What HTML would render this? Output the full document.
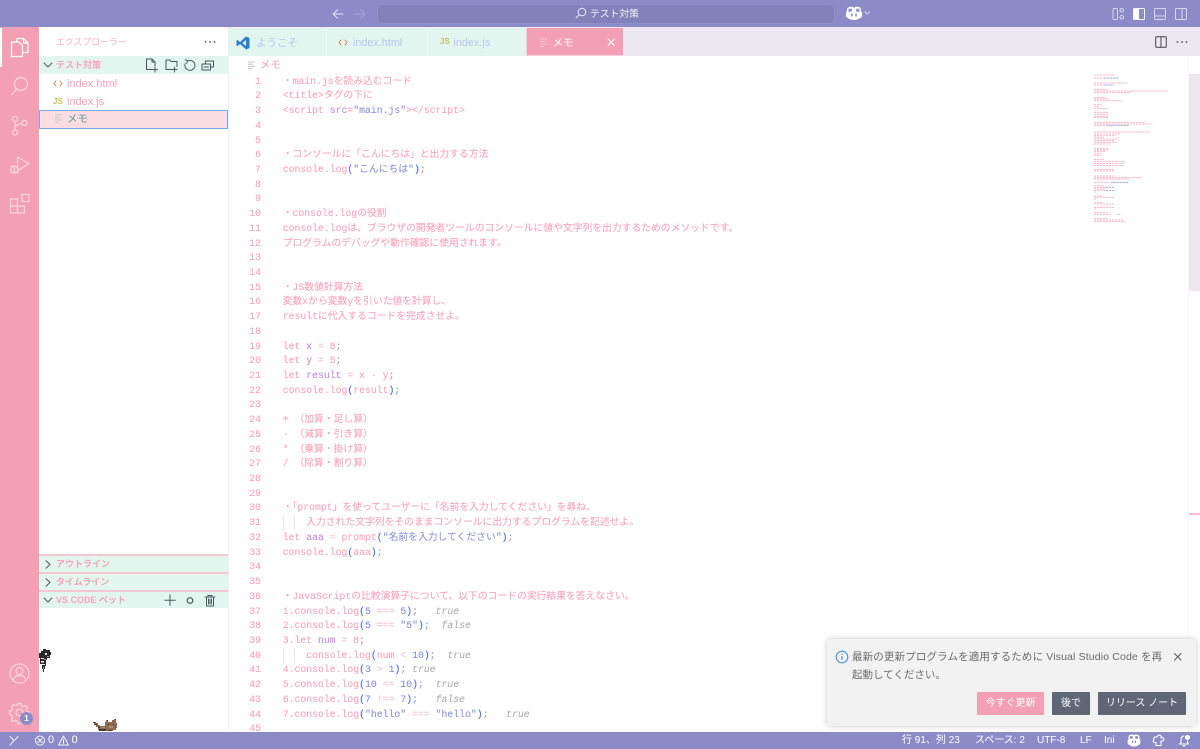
<!DOCTYPE html>
<html lang="ja"><head><meta charset="utf-8"><title>VS Code</title>
<style>
html,body{margin:0;padding:0;width:1200px;height:749px;overflow:hidden;background:#fff}
body{position:relative;font-family:"Liberation Sans","Noto Sans CJK JP",sans-serif}
.a{position:absolute}
svg{position:absolute;overflow:visible}
.s{fill:none;stroke-linecap:round;stroke-linejoin:round}
.t{position:absolute;white-space:nowrap;line-height:14px}
.h{position:absolute;left:39px;width:189px;background:#e2f5ee}
.ht{position:absolute;left:56px;font-size:9px;font-weight:bold;color:#f6a5ba;line-height:16px;white-space:nowrap}
#nums{position:absolute;left:232px;top:74.64px;width:29px;text-align:right;font:9.8px/14.72px "Liberation Mono",monospace;color:#f7a5ba;-webkit-text-stroke:.1px #f7a5ba;height:657px;overflow:hidden}
#code{position:absolute;left:282.7px;top:74.64px;width:800px;font:9.8px/14.72px "Liberation Mono","Noto Sans CJK JP",monospace;color:#f7a5ba;-webkit-text-stroke:.1px currentColor}
#code div{white-space:pre}
#code div,#nums div{height:14.72px}
.v{color:#c68ade}.q{color:#8d93d6}.b{color:#4468f0}.p{color:#97a3c4}.n{color:#8a8ee0}.o{color:#f3c4d8}.c{color:#aeaeae;font-style:italic}.k{color:#c195dc}
.st{position:absolute;top:732px;height:17px;line-height:17px;font-size:10px;color:#fff;white-space:nowrap}
.btn{position:absolute;top:692px;height:23px;line-height:23px;text-align:center;font-size:10px;color:#fff;border-radius:1px;background:#5f6675}
</style></head><body>

<!-- title bar -->
<div class="a" style="left:0;top:0;width:1200px;height:27px;background:#8b8cc7"></div>
<div class="a" style="left:377px;top:4px;width:456px;height:18px;background:#8282bb;border:1px solid #8f90c9;border-radius:5px"></div>
<svg style="left:332px;top:8px" width="12" height="12" viewBox="0 0 12 12"><path class="s" stroke="#e6e6f5" d="M11 6H1.500M5.500 1.800 1.200 6l4.300 4.200"/></svg>
<svg style="left:354px;top:8px" width="12" height="12" viewBox="0 0 12 12"><path class="s" stroke="#a3a4d6" d="M1 6h9.500M6.500 1.800 10.800 6l-4.300 4.200"/></svg>
<svg style="left:575px;top:7px" width="12" height="12" viewBox="0 0 12 12"><circle class="s" stroke="#e8e8f6" cx="7" cy="5" r="3.800"/><path class="s" stroke="#e8e8f6" d="M4.200 7.800 1 11"/></svg>
<div class="t" style="left:590px;top:7.500px;font-size:9.800px;color:#f2f2fa">テスト対策</div>
<svg style="left:844px;top:6px" width="26" height="15" viewBox="0 0 26 15"><path fill="#fff" d="M3 3.500C3 1.500 5 .8 7 .8c1.300 0 2.300.4 2.800 1.200h.4C10.700 1.200 11.700.8 13 .8c2 0 4 .7 4 2.700 0 .6 0 1.200-.2 1.700.9.500 1.200 1.100 1.200 2V10c0 .6-.3 1-.8 1.400C15.500 12.700 13 14 10 14s-5.500-1.300-7.200-2.600C2.300 11 2 10.600 2 10V7.200c0-.9.300-1.500 1.200-2C3 4.700 3 4.100 3 3.500z"/><path fill="#8b8cc7" d="M4.500 2.800h3.300v3H4.500zM12.200 2.800h3.300v3h-3.300zM7.200 7.500h1.500v3H7.200zM11.300 7.500h1.500v3h-1.500z"/><path class="s" stroke="#d5d6ee" d="M21 6l2.200 2.200L25.400 6"/></svg>
<svg style="left:1112px;top:7px" width="80" height="14" viewBox="0 0 80 14">
<rect x="1" y="1.500" width="4.500" height="11" rx="1" class="s" stroke="#d5d6ee"/><rect x="8" y="1.500" width="3.500" height="3.500" rx="1.700" class="s" stroke="#d5d6ee"/><rect x="8" y="8.500" width="3.500" height="3.500" rx="1.700" class="s" stroke="#d5d6ee"/>
<rect x="21.500" y="1.500" width="11" height="11" rx="1" class="s" stroke="#f4f4fb"/><rect x="22" y="2" width="5" height="10" fill="#fff"/>
<rect x="42.500" y="1.500" width="11" height="11" rx="1" class="s" stroke="#d5d6ee"/><path class="s" stroke="#d5d6ee" d="M43 9h10"/>
<rect x="63.500" y="1.500" width="11" height="11" rx="1" class="s" stroke="#d5d6ee"/><path class="s" stroke="#d5d6ee" d="M70 2v10"/>
</svg>

<!-- activity bar -->
<div class="a" style="left:0;top:27px;width:39px;height:705px;background:#f3a0b5"></div>
<div class="a" style="left:0;top:28px;width:2px;height:39px;background:#fff"></div>
<svg style="left:10px;top:37px" width="20" height="21" viewBox="0 0 20 21"><path class="s" stroke="#fff" stroke-width="1.200" d="M7 5V1.500h6.500L18 6v9.500h-5M13.500 1.500V6H18M1.500 5H9l3.500 3.500v11h-11z"/></svg>
<svg style="left:10px;top:76px" width="20" height="21" viewBox="0 0 20 21"><circle class="s" stroke="#fbd5df" stroke-width="1.200" cx="11" cy="8" r="6.500"/><path class="s" stroke="#fbd5df" stroke-width="1.200" d="M6.500 13 2 18.500"/></svg>
<svg style="left:10px;top:115px" width="20" height="21" viewBox="0 0 20 21"><g class="s" stroke="#fbd5df" stroke-width="1.200"><circle cx="5" cy="4" r="2.500"/><circle cx="5" cy="17.500" r="2.500"/><circle cx="14.500" cy="8" r="2.500"/><path d="M5 6.500v8.500M12 8.500c-3 .5-7 1.500-7 5"/></g></svg>
<svg style="left:9px;top:154px" width="21" height="21" viewBox="0 0 21 21"><g class="s" stroke="#fbd5df" stroke-width="1.200"><path d="M8.500 3 20 9.500 10 16M8.500 3v6"/><circle cx="5.500" cy="15.500" r="3.500"/><path d="M5.500 12v7M1 15.500h1.500M8.500 15.500H10M2 12l1 1M9 12l-1 1M2 19l1-1M9 19l-1-1"/></g></svg>
<svg style="left:9px;top:193px" width="21" height="22" viewBox="0 0 21 22"><g class="s" stroke="#fbd5df" stroke-width="1.200"><rect x="1.500" y="6" width="7" height="7"/><rect x="1.500" y="13" width="7" height="7"/><rect x="8.500" y="13" width="7" height="7"/><rect x="13" y="1.500" width="7" height="7"/></g></svg>
<svg style="left:9px;top:663px" width="21" height="21" viewBox="0 0 21 21"><g class="s" stroke="#fbd5df" stroke-width="1.200"><circle cx="10.500" cy="10.500" r="9.500"/><circle cx="10.500" cy="8" r="3.500"/><path d="M4 17c1-3.500 4-4.500 6.500-4.500S16 13.500 17 17"/></g></svg>
<svg style="left:9px;top:702px" width="21" height="21" viewBox="0 0 21 21"><g class="s" stroke="#fbd5df" stroke-width="1.200"><circle cx="10.500" cy="10.500" r="3.500"/><path d="M9 1.500h3l.5 2.500 2 .8 2.200-1.400 2 2-1.400 2.200.8 2 2.500.5v3l-2.500.5-.8 2 1.400 2.200-2 2-2.200-1.400-2 .8-.5 2.500H9l-.5-2.500-2-.8-2.200 1.400-2-2 1.400-2.200-.8-2L.5 12V9L3 8.500l.8-2L2.400 4.300l2-2 2.200 1.400 2-.8z"/></g></svg>
<div class="a" style="left:20px;top:712px;width:13px;height:13px;border-radius:50%;background:#8b8cc7;color:#fff;font-size:8px;font-weight:bold;line-height:13px;text-align:center">1</div>

<!-- sidebar -->
<div class="t" style="left:56px;top:35px;font-size:8.900px;color:#f8b1c4">エクスプローラー</div>
<svg style="left:204px;top:40px" width="12" height="4" viewBox="0 0 12 4"><g fill="#555"><circle cx="1.500" cy="2" r=".9"/><circle cx="6" cy="2" r=".9"/><circle cx="10.500" cy="2" r=".9"/></g></svg>
<div class="h" style="top:56px;height:18px"></div>
<svg style="left:43px;top:62px" width="10" height="6" viewBox="0 0 10 6"><path class="s" stroke="#555" d="M1 1l4 4 4-4"/></svg>
<div class="ht" style="top:57px">テスト対策</div>
<svg style="left:145px;top:58px" width="72" height="15" viewBox="0 0 72 15"><g class="s" stroke="#4d5560" stroke-width="1">
<path d="M7 11.500H1.500V1H7l3 3v4M7 1v3h3M10 9v5M7.500 11.500h5"/>
<path d="M27 11.500H21V2h4l1 1.500h6v5M29.500 9v5M27 11.500h5"/>
<path d="M42.600 2.900A5 5 0 1 1 40.200 5.600M40.300 1.600l2.400 1.200-1 2.400"/>
<path d="M60.500 5.500V3h8v6h-2.500M57 6h8.500v6H57zM59 9h4.500"/></g></svg>
<svg style="left:53px;top:80px" width="10" height="7" viewBox="0 0 10 7"><path class="s" stroke="#c98a4f" stroke-width="1" d="M3 1 1 3.500 3 6M7 1 9 3.500 7 6"/></svg>
<div class="t" style="left:67px;top:77px;font-size:11px;color:#f6a0b6">index.html</div>
<div class="t" style="left:53px;top:95px;font-size:8px;font-weight:bold;color:#c7bf5c">JS</div>
<div class="t" style="left:67px;top:95px;font-size:11px;color:#f6a0b6">index.js</div>
<div class="a" style="left:39px;top:110px;width:187px;height:16.500px;background:#f9dce4;border:1px solid #74a9ec"></div>
<svg style="left:55px;top:114px" width="8" height="10" viewBox="0 0 8 10"><path stroke="#c9c9c9" stroke-width="1.100" d="M0 1h7M0 3.500h5M0 6h7M0 8.500h4"/></svg>
<div class="t" style="left:67px;top:112px;font-size:10.500px;color:#5e9f94">メモ</div>

<div class="a" style="left:39px;top:554px;width:189px;height:2px;background:#f6c6d3"></div>
<div class="h" style="top:556px;height:16px"></div>
<svg style="left:45px;top:560px" width="6" height="9" viewBox="0 0 6 9"><path class="s" stroke="#555" d="M1 .8l4 3.700-4 3.700"/></svg>
<div class="ht" style="top:556px">アウトライン</div>
<div class="a" style="left:39px;top:572px;width:189px;height:2px;background:#f6c6d3"></div>
<div class="h" style="top:574px;height:16px"></div>
<svg style="left:45px;top:578px" width="6" height="9" viewBox="0 0 6 9"><path class="s" stroke="#555" d="M1 .8l4 3.700-4 3.700"/></svg>
<div class="ht" style="top:574px">タイムライン</div>
<div class="a" style="left:39px;top:590px;width:189px;height:2px;background:#f6c6d3"></div>
<div class="h" style="top:592px;height:16px"></div>
<svg style="left:43px;top:597px" width="10" height="6" viewBox="0 0 10 6"><path class="s" stroke="#555" d="M1 1l4 4 4-4"/></svg>
<div class="ht" style="top:592px">VS CODE ペット</div>
<svg style="left:164px;top:594px" width="52" height="13" viewBox="0 0 52 13"><g class="s" stroke="#4d5560" stroke-width="1"><path d="M6 1v10.500M.8 6.300h10.500"/><circle cx="26" cy="6.500" r="2.800" stroke-width="1.200"/><path d="M41 3h10M44 3V1.500h4V3M42.500 3v9h7V3M44.500 5v5M46 5v5M47.500 5v5"/></g></svg>

<!-- pets -->
<svg style="left:39px;top:649px" width="13" height="25" viewBox="0 0 13 25" shape-rendering="crispEdges">
<path fill="#2a2a2a" d="M2 2h2V0h3v1h4v2h1v3h-1v3H8v2H7v6H6v3H5v3H4v-3H3v-5H1v-6H0V4h2z"/>
<path fill="#ededed" d="M6 4h2v2H6zM2 9h3v1H2zM2 12h3v1H2zM3 15h3v1H3z"/>
<path fill="#9a9a9a" d="M8 7h2v1H8zM5 10h2v1H5zM2 13h3v1H2zM4 18h1v2H4z"/>
</svg>
<svg style="left:93px;top:719px" width="24" height="13" viewBox="0 0 24 13" shape-rendering="crispEdges">
<path fill="#8a6a50" d="M12 3h1V1h2v2h4V1h2V0h2v4h1v5h-1v2h-3v1H6v-1H5V8H3V6H1V4H0V3h3v1h2v2h2v1h5z"/>
<path fill="#4b3627" d="M0 3h2v1H0zM2 5h2v1H2zM5 8h2v1H5zM6 10h7v2H6zM15 11h4v1h-4zM15 5h1v1h-1zM20 5h1v1h-1zM14 1h1v1h-1zM22 0h1v1h-1z"/>
<path fill="#b08f70" d="M16 7h4v2h-4zM8 8h4v1H8z"/>
</svg>

<!-- tabs -->
<div class="a" style="left:228px;top:27px;width:972px;height:29px;background:#ede8ef"></div>
<div class="a" style="left:228px;top:28px;width:298px;height:28px;background:#e2f5ee"></div>
<div class="a" style="left:326px;top:28px;width:1px;height:28px;background:#ecf8f4"></div>
<div class="a" style="left:427px;top:28px;width:1px;height:28px;background:#ecf8f4"></div>
<div class="a" style="left:526px;top:28px;width:97px;height:28px;background:#f3a0b5;box-sizing:border-box;border-left:1px solid #f9cdd9;border-bottom:1px solid #f9cdd9"></div>
<svg style="left:236px;top:36px" width="14" height="14" viewBox="0 0 14 14"><path fill="#2b7fd0" d="M10 .5 13.500 2v10L10 13.500 4 8 1.500 10 .5 9.500V4.500L1.500 4 4 6zM10 4 6.300 7 10 10z"/></svg>
<div class="t" style="left:256px;top:36px;font-size:10.500px;color:#b9c6ee">ようこそ</div>
<svg style="left:338px;top:39px" width="10" height="7" viewBox="0 0 10 7"><path class="s" stroke="#c98a4f" stroke-width="1" d="M3 1 1 3.500 3 6M7 1 9 3.500 7 6"/></svg>
<div class="t" style="left:353px;top:36px;font-size:10.800px;color:#b9c6ee">index.html</div>
<div class="t" style="left:440px;top:35px;font-size:8px;font-weight:bold;color:#c7bf5c">JS</div>
<div class="t" style="left:453.500px;top:36px;font-size:10.800px;color:#b9c6ee">index.js</div>
<svg style="left:540px;top:38px" width="8" height="10" viewBox="0 0 8 10"><path stroke="#f7c3d0" stroke-width="1.100" d="M0 1h7M0 3.500h5M0 6h7M0 8.500h4"/></svg>
<div class="t" style="left:552.500px;top:36px;font-size:10.500px;color:#fff">メモ</div>
<svg style="left:607px;top:38px" width="9" height="9" viewBox="0 0 9 9"><path class="s" stroke="#fff" d="M1 1l6.500 6.500M7.500 1 1 7.500"/></svg>
<svg style="left:1155px;top:36px" width="12" height="12" viewBox="0 0 12 12"><rect x=".7" y=".7" width="10.600" height="10.600" rx="1" class="s" stroke="#555" stroke-width="1.100"/><path stroke="#555" stroke-width="1.100" d="M6 1v10"/></svg>
<svg style="left:1176px;top:40px" width="12" height="4" viewBox="0 0 12 4"><g fill="#555"><circle cx="1.500" cy="2" r=".9"/><circle cx="6" cy="2" r=".9"/><circle cx="10.500" cy="2" r=".9"/></g></svg>

<!-- editor -->
<div class="a" style="left:228px;top:56px;width:1px;height:676px;background:#f0eff1"></div>
<svg style="left:248px;top:61px" width="8" height="9" viewBox="0 0 8 9"><path stroke="#c9c9c9" stroke-width="1.100" d="M0 1h7M0 3.200h5M0 5.400h7M0 7.600h4"/></svg>
<div class="t" style="left:260px;top:58px;font-size:10.500px;color:#f6a0b6">メモ</div>
<div class="a" style="left:282.700px;top:515.800px;width:1px;height:14.720px;background:#e6e6e6"></div>
<div class="a" style="left:294.300px;top:515.800px;width:1px;height:14.720px;background:#e6e6e6"></div>
<div class="a" style="left:282.700px;top:648.300px;width:1px;height:14.720px;background:#e6e6e6"></div>
<div class="a" style="left:294.300px;top:648.300px;width:1px;height:14.720px;background:#e6e6e6"></div>

<div id="nums"><div>1</div><div>2</div><div>3</div><div>4</div><div>5</div><div>6</div><div>7</div><div>8</div><div>9</div><div>10</div><div>11</div><div>12</div><div>13</div><div>14</div><div>15</div><div>16</div><div>17</div><div>18</div><div>19</div><div>20</div><div>21</div><div>22</div><div>23</div><div>24</div><div>25</div><div>26</div><div>27</div><div>28</div><div>29</div><div>30</div><div>31</div><div>32</div><div>33</div><div>34</div><div>35</div><div>36</div><div>37</div><div>38</div><div>39</div><div>40</div><div>41</div><div>42</div><div>43</div><div>44</div><div>45</div></div>

<div id="code"><div>・main.jsを読み込むコード</div><div>&lt;title&gt;タグの下に</div><div>&lt;script <span class="k">src</span>=<span class="q">"main.js"</span>&gt;&lt;/script&gt;</div><div></div><div></div><div>・コンソールに「こんにちは」と出力する方法</div><div>console.log<span class="b">(</span><span class="q">"こんにちは"</span><span class="b">)</span><span class="p">;</span></div><div></div><div></div><div>・console.logの役割</div><div>console.logは、ブラウザの開発者ツールのコンソールに値や文字列を出力するためのメソッドです。</div><div>プログラムのデバッグや動作確認に使用されます。</div><div></div><div></div><div>・JS数値計算方法</div><div>変数xから変数yを引いた値を計算し、</div><div>resultに代入するコードを完成させよ。</div><div></div><div>let <span class="v">x</span> <span class="o">=</span> 8<span class="p">;</span></div><div>let <span class="v">y</span> <span class="o">=</span> 5<span class="p">;</span></div><div>let <span class="v">result</span> <span class="o">=</span> x - y<span class="p">;</span></div><div>console.log<span class="b">(</span>result<span class="b">)</span><span class="p">;</span></div><div></div><div>+ （加算・足し算）</div><div>- （減算・引き算）</div><div>* （乗算・掛け算）</div><div>/ （除算・割り算）</div><div></div><div></div><div>・「prompt」を使ってユーザーに「名前を入力してください」を尋ね、</div><div>    入力された文字列をそのままコンソールに出力するプログラムを記述せよ。</div><div>let <span class="v">aaa</span> <span class="o">=</span> prompt<span class="b">(</span><span class="q">"名前を入力してください"</span><span class="b">)</span><span class="p">;</span></div><div>console.log<span class="b">(</span>aaa<span class="b">)</span><span class="p">;</span></div><div></div><div></div><div>・JavaScriptの比較演算子について、以下のコードの実行結果を答えなさい。</div><div>1.console.log<span class="b">(</span><span class="n">5</span> <span class="o">===</span> <span class="n">5</span><span class="b">)</span><span class="p">;</span>   <span class="c">true</span></div><div>2.console.log<span class="b">(</span><span class="n">5</span> <span class="o">===</span> <span class="q">"5"</span><span class="b">)</span><span class="p">;</span>  <span class="c">false</span></div><div>3.let <span class="v">num</span> <span class="o">=</span> 8<span class="p">;</span></div><div>    console.log<span class="b">(</span>num <span class="o">&lt;</span> <span class="n">10</span><span class="b">)</span><span class="p">;</span>  <span class="c">true</span></div><div>4.console.log<span class="b">(</span><span class="n">3</span> <span class="o">&gt;</span> <span class="n">1</span><span class="b">)</span><span class="p">;</span> <span class="c">true</span></div><div>5.console.log<span class="b">(</span><span class="n">10</span> <span class="o">&lt;=</span> <span class="n">10</span><span class="b">)</span><span class="p">;</span>  <span class="c">true</span></div><div>6.console.log<span class="b">(</span><span class="n">7</span> <span class="o">!==</span> <span class="n">7</span><span class="b">)</span><span class="p">;</span>   <span class="c">false</span></div><div>7.console.log<span class="b">(</span><span class="q">"hello"</span> <span class="o">===</span> <span class="q">"hello"</span><span class="b">)</span><span class="p">;</span>   <span class="c">true</span></div></div>

<!-- minimap -->
<svg style="left:1094px;top:0;filter:blur(.35px)" width="80" height="230" viewBox="882 0 240 690"><g stroke="#f8b9ca" stroke-width="3" stroke-dasharray="7 2" fill="none">
<path d="M882 225h60M882 234h30M882 249h100M882 255h30M882 268h40M882 273h222M882 278h110M882 293h38M882 297h45M882 302h85M882 314h22M882 319h15M882 325h45M882 337h42M882 343h42M882 349h42M882 352h42M882 367h155M882 372h175M882 376h40M882 396h170M882 402h78M882 407h65M882 412h30M882 417h75M882 422h62M882 427h68M882 432h50M882 446h45M882 450h45M882 455h35M882 460h20M882 466h22M882 478h30M882 484h70M882 490h70M882 496h70M882 509h60M882 513h60M882 528h65M882 533h145M882 537h105M882 547h45M882 557h30M882 562h35M882 567h40M882 572h35M882 576h5M882 588h25M882 592h60M882 598h5M882 607h25M882 612h60M882 622h60M882 627h5M882 637h45M882 643h50M882 655h40M882 660h90M882 665h95"/></g>
<g stroke="#a5a9e4" stroke-width="3" stroke-dasharray="7 2" fill="none"><path d="M912 234h45M912 255h30M922 376h65M932 547h55M917 562h25M917 572h30"/></g>
<g stroke="#d6d6d6" stroke-width="3" fill="none"><path d="M952 484h22M952 490h22M952 496h22M950 643h12"/></g></svg>
<div class="a" style="left:1188.500px;top:74px;width:11.500px;height:217px;background:#ede6ee"></div>
<div class="a" style="left:1188px;top:56px;width:1px;height:676px;background:#f8f6f8"></div>
<div class="a" style="left:1189px;top:513px;width:11px;height:2px;background:#f8c0cf"></div>

<!-- notification -->
<div class="a" style="left:827px;top:639px;width:369px;height:87px;background:#f2f2f3;border-radius:3px;box-shadow:0 0 6px rgba(0,0,0,.22)"></div>
<svg style="left:835px;top:650px" width="14" height="14" viewBox="0 0 14 14"><circle class="s" stroke="#4d8fe6" stroke-width="1.100" cx="7" cy="7" r="5.800"/><path stroke="#4d8fe6" stroke-width="1.200" d="M7 6v4M7 3.800v1.200"/></svg>
<div class="t" style="left:852px;top:650px;font-size:10.500px;color:#6a6a6a;letter-spacing:.14px">最新の更新プログラムを適用するために Visual Studio Code を再</div>
<div class="t" style="left:852px;top:668px;font-size:10.500px;color:#6a6a6a">起動してください。</div>
<svg style="left:1173px;top:652px" width="10" height="10" viewBox="0 0 10 10"><path class="s" stroke="#555" d="M1.500 1.500l6.500 6.500M8 1.500 1.500 8"/></svg>
<div class="btn" style="left:977px;width:67px;background:#f3a0b5">今すぐ更新</div>
<div class="btn" style="left:1052px;width:38px">後で</div>
<div class="btn" style="left:1098px;width:88px">リリース ノート</div>

<!-- status bar -->
<div class="a" style="left:0;top:732px;width:1200px;height:17px;background:#8b8cc7"></div>
<svg style="left:9px;top:735px" width="10" height="11" viewBox="0 0 10 11"><path class="s" stroke="#f2f2fa" d="M1 10l4-4.500L1 1.500M9 1.500 6 5"/></svg>
<svg style="left:35px;top:735px" width="10" height="11" viewBox="0 0 10 11"><circle class="s" stroke="#f2f2fa" cx="5" cy="5.500" r="4.500"/><path class="s" stroke="#f2f2fa" d="M3 3.500l4 4M7 3.500l-4 4"/></svg>
<div class="st" style="left:48px;font-size:11px">0</div>
<svg style="left:58px;top:735px" width="11" height="11" viewBox="0 0 11 11"><path class="s" stroke="#f2f2fa" d="M5.500 1 10.500 10H.5zM5.500 4.500V7.500M5.500 8.500v.3"/></svg>
<div class="st" style="left:71.500px;font-size:11px">0</div>
<div class="st" style="left:902px">行 91、列 23</div>
<div class="st" style="left:975px">スペース: 2</div>
<div class="st" style="left:1037px">UTF-8</div>
<div class="st" style="left:1080px">LF</div>
<div class="st" style="left:1104px">Ini</div>
<svg style="left:1127px;top:734px" width="14" height="13" viewBox="0 0 14 13"><path fill="#fff" d="M1.500 3C1.500 1 3.500.5 5 .5c1 0 1.700.3 2 1 .3-.7 1-1 2-1 1.500 0 3.500.5 3.500 2.500 0 .6 0 1-.2 1.500.7.400 1 1 1 1.700V9c0 .5-.2.800-.6 1.100C11.500 11.300 9.500 12.500 7 12.500S2.500 11.300 1.300 10.100C.9 9.800.7 9.500.7 9V6.700c0-.7.300-1.300 1-1.700C1.500 4.500 1.500 3.600 1.500 3z"/><path fill="#8b8cc7" d="M3 2.200h2.800v2.500H3zM8.200 2.200H11v2.500H8.200zM5 6.500h1.200v2.500H5zM7.800 6.500H9v2.500H7.800z"/></svg>
<svg style="left:1152px;top:734px" width="13" height="13" viewBox="0 0 13 13"><path class="s" stroke="#fff" stroke-width="1.100" d="M4 11.500V8.500H2C1 8 1 6 2 5.500V3.500C3 2.500 4.500 3 5 3c.5-1.500 2-2.500 3.500-1.500.8.500 1 1.500.5 2.500H11.500C12 5 12 6.500 11 7H9v4.500z"/></svg>
<svg style="left:1178px;top:734px" width="13" height="13" viewBox="0 0 13 13"><path class="s" stroke="#fff" stroke-width="1.100" d="M6 2C3.500 2 3 4 3 6v2.500L1.500 10h9L9.500 8.500V7M5 11.500c.5.600 1.500.600 2 0"/><circle cx="9.500" cy="3.500" r="2.500" fill="#fff"/></svg>
</body></html>
